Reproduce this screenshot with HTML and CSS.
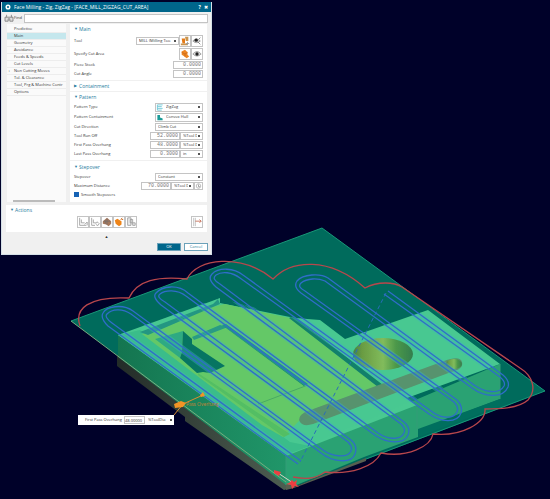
FILE: index.html
```html
<!DOCTYPE html>
<html lang="en">
<head>
<meta charset="utf-8">
<title>Face Milling - Zig, ZigZag</title>
<link rel="stylesheet" href="styles.css">
</head>
<body>
<main class="viewport">
<svg class="model" viewBox="0 0 550 499" preserveAspectRatio="xMinYMin meet" aria-label="Milled part with tool path">
<defs>
<linearGradient id="bore"><stop offset="0" stop-color="#43804a"/><stop offset=".15" stop-color="#6a9c43"/><stop offset=".5" stop-color="#82bc5c"/><stop offset=".72" stop-color="#4c984a"/><stop offset="1" stop-color="#347e4f"/></linearGradient>
<linearGradient id="side"><stop offset="0" stop-color="#147550"/><stop offset="1" stop-color="#209669"/></linearGradient>
<linearGradient id="base"><stop offset="0" stop-color="#232c28"/><stop offset="1" stop-color="#4f6053"/></linearGradient>
<clipPath id="top"><path d="m118 335 100-37 77 20 25 2 25 19 83-29 72 54-214 91z"/></clipPath>
<path id="passA" d="M298 464 108 326Q100 318 103 313C106 307 122 303 133 311L323 450C331 456 347 459 351 451Q353 447 348 442L161 305Q152 297 156 293C162 286 178 284 188 293L378 433C387 439 400 441 404 433Q406 429 401 424L216 287Q207 279 212 274C219 267 234 268 243 275L431 411C440 418 453 420 457 412Q459 407 454 402L301 293Q293 287 297 281C303 274 320 273 328 278L474 385C484 392 499 395 504 386Q506 382 500 377L384 294"/>
<path id="passB" d="M301 461 112 323Q104 317 107 314C112 309 122 308 131 314L321 453C331 461 351 465 355 454Q358 446 351 440L165 302Q156 297 160 294C165 290 177 289 186 296L376 436C387 443 404 445 408 435Q411 428 404 422L220 284Q211 279 216 275C222 271 232 272 240 278L429 414C440 422 457 424 461 413Q463 406 457 400L305 291Q297 287 301 283C307 278 318 278 325 281L472 388C484 397 503 399 508 387Q510 381 503 375L388 291"/>
</defs>
<path fill="url(#base)" d="M117 352v14l68 51v4l99 69 11-3z"/>
<path fill="#006b5c" d="M71 321 322 228 545 391 294 487z"/>
<path fill="none" stroke="#179878" d="M71 321 322 228 545 391 366 459"/>
<path fill="url(#side)" d="M118 335v22l168 128v-30z"/>
<path fill="#2aa273" d="M286 455 500 364v35l-82 31v7l-54 20-70 29-8-2z"/>
<path fill="#585f50" d="m286 484 8 3 72-29v3l-72 27-8 2z"/>
<path fill="#006f5e" d="m418 429 82-30v7l-82 31z"/>
<path fill="#49c991" d="m118 335 94-34 8-3v5l75 15 25 2 25 19 83-29 72 54-93 34 10 7-131 51z"/>
<path fill="#3bbd8a" d="m118 335 22-5 150 112 20 4-24 9z"/>
<path fill="#65c968" d="m142 334 70-27 13-3 70 15 87 67-82 34-17 17-21-12z"/>
<path fill="#54be64" d="m198 373 92 61-6 3-86-62z"/>
<path fill="#239783" d="m140 332 73-28 5-5 2 5-72 31z"/>
<path fill="#2a9c84" d="m192 337 28-12 8 2-34 13z"/>
<path fill="#2fab83" d="m155 339 28-8-1 21-2 6z"/>
<path fill="#077563" d="m183 331 9 8v5l33 22-15 7-7-1-6 1-17-15 2-6z"/>
<path fill="#13806c" d="m222 325 4-1 82 60-4 2zM293 316l90 69-5 2-89-69z"/>
<path fill="none" stroke="#4aaa64" d="m258 404 50-19"/>
<path fill="#58936e" d="m305 412 139-51q16-6 18 1t-11 10l-138 52q-10 3-13-2t5-10z"/>
<ellipse cx="454" cy="364" rx="8" ry="5" fill="url(#bore)"/>
<ellipse cx="383" cy="354" rx="30" ry="16" fill="url(#bore)"/>
<path fill="none" stroke="#329c79" d="M286 455v30M500 364v35M417 407v23"/>
<g fill="none" stroke="#40b3bb" stroke-width="4" opacity=".4" clip-path="url(#top)"><use href="#passA"/><use href="#passB"/></g>
<path fill="none" stroke="#78ad81" d="M71 321 286 482"/>
<g fill="none" stroke="#2f6dc8" stroke-width="1.3"><use href="#passA"/><use href="#passB"/></g>
<path fill="none" stroke="#286dbb" stroke-dasharray="4 3" d="M386 293 300 462"/>
<path fill="none" stroke="#b8474c" stroke-width="1.3" d="M80 326C74 309 88 296 129 298 137 280 158 276 187 279 197 258 241 253 273 279 291 260 329 256 365 288 378 281 394 282 402 287L520 368C533 376 537 390 528 400 518 409 497 409 485 409 486 423 461 437 433 434 431 446 408 458 381 453 374 467 350 475 325 472 314 480 304 479 293 477"/>
<path stroke="#d9d4c5" d="m278 473 15 10"/>
<path fill="#ed3f42" d="m274 470 7 2-2 4-5-3zm15 13 3-3 2 2 3-2-1 4 3 3-4-1-3 3-1-4-5-1z"/>
<path fill="none" stroke="#d98c31" d="m174 415 9-11 20-9"/>
<path fill="#f29426" d="m174 404 7-3 5 2-3 4-8 1zm26-9 3-3 2 4-4 1z"/>
<text x="186" y="406" class="note">Pass Overhang</text>
</svg>

<form class="dialog">
<header class="title"><svg class="gear" viewBox="0 0 8 8"><circle cx="4" cy="4" r="2.4" fill="none" stroke="#fff" stroke-width="2"/></svg><h1>Face Milling - Zig, ZigZag - [FACE_MILL_ZIGZAG_CUT_AREA]</h1><span>?</span><button type="button" aria-label="Close">✖</button></header>
<div class="find"><svg class="binocular" viewBox="0 0 12 10"><path d="M1 4h10v5H7V6H5v3H1zM3 1v3M9 1v3" fill="#ddd" stroke="#777"/></svg><label for="find">Find</label><input id="find"></div>
<div class="body">
<nav>
<a href="#p">Predictive</a><a href="#main" class="on">Main</a><a href="#g">Geometry</a><a href="#a">Avoidance</a><a href="#f">Feeds &amp; Speeds</a><a href="#c">Cut Levels</a><a href="#n" class="parent">Non Cutting Moves</a><a href="#t">Tol. &amp; Clearance</a><a href="#tp">Tool, Prg &amp; Machine Contr</a><a href="#o">Options</a>
<div class="bar"></div>
</nav>
<div class="panels">
<section id="main"><h2>Main</h2>
<div class="row tall"><label for="tool">Tool</label><select id="tool" class="toolname"><option>MILL (Milling Too</option></select><button type="button" class="sq" aria-label="New tool"><svg viewBox="0 0 12 12"><path d="M2 3h4v6H3z" fill="#e47a17"/><path d="M6 1h4v5H7zM1 9h8v2H1z" fill="#c99550"/><path d="M9 7v4M7 9h4" stroke="#999"/></svg></button><button type="button" class="sq" aria-label="Edit tool"><svg viewBox="0 0 12 12"><path d="M1 6q4-5 9 0-5 4-9 0" fill="#ddd" stroke="#999"/><circle cx="5" cy="5" r="2" fill="#222"/><path d="m7 7 3 3M8 4l2-2" stroke="#777"/></svg></button></div>
<div class="row tall"><label>Specify Cut Area</label><button type="button" class="sq" aria-label="Specify cut area"><svg viewBox="0 0 12 12"><path d="m2 3 4-2 3 3v3l2 2-3 2-4-3-2-1z" fill="#ee8622"/><path d="m2 4 4 2 3-2M6 6v3" stroke="#c96a1b" fill="none"/></svg></button><button type="button" class="sq" aria-label="Show cut area"><svg viewBox="0 0 12 12"><path d="M1 6q5-6 10 0-5 5-10 0" fill="#ddd" stroke="#999"/><circle cx="6" cy="6" r="2" fill="#222"/></svg></button></div>
<div class="row"><label for="stock">Piece Stock</label><input id="stock" value="0.0000"></div>
<div class="row"><label for="angle">Cut Angle</label><input id="angle" value="0.0000"></div>
</section>
<section class="closed"><h2 class="shut">Containment</h2></section>
<section><h2>Pattern</h2>
<div class="row mid"><label for="type">Pattern Type</label><div class="pick"><svg viewBox="0 0 8 8"><path d="M1 1h6M1 3h5M1 5h6M1 7h5M1 1v6" stroke="#6cc6d6" fill="none"/></svg><select id="type"><option>ZigZag</option></select></div></div>
<div class="row mid"><label for="cont">Pattern Containment</label><div class="pick"><svg viewBox="0 0 8 8"><path d="M1 1h3v3l3 1v2H1z" fill="#1b9b98"/></svg><select id="cont"><option>Convex Hull</option></select></div></div>
<div class="row"><label for="dir">Cut Direction</label><select id="dir"><option>Climb Cut</option></select></div>
<div class="row"><label for="run">Tool Run Off</label><input id="run" value="52.0000"><select class="unit" aria-label="Run off unit"><option>%Tool D</option></select></div>
<div class="row"><label for="first">First Pass Overhang</label><input id="first" value="48.0000"><select class="unit" aria-label="First overhang unit"><option>%Tool D</option></select></div>
<div class="row"><label for="last">Last Pass Overhang</label><input id="last" value="0.3000"><select class="unit" aria-label="Last overhang unit"><option>in</option></select></div>
</section>
<section class="step"><h2>Stepover</h2>
<div class="row"><label for="step">Stepover</label><select id="step"><option>Constant</option></select></div>
<div class="row"><label for="max">Maximum Distance</label><input id="max" value="70.0000"><select class="unit" aria-label="Distance unit"><option>%Tool D</option></select><button type="button" class="mini" aria-label="Lock distance"><svg viewBox="0 0 8 8"><circle cx="4" cy="4" r="3" fill="none" stroke="#aaa"/><path d="M4 2v3h2" stroke="#888" fill="none"/></svg></button></div>
<div class="row check"><input type="checkbox" id="smooth" checked><label for="smooth">Smooth Stepovers</label></div>
</section>
</div>
</div>
<section class="actions"><h2>Actions</h2><div class="tools">
<button type="button" class="sq" aria-label="Generate"><svg viewBox="0 0 12 12"><path d="M2 1v9h8M4 3v4h4M8 9l3-3v4" stroke="#999" fill="none"/></svg></button>
<button type="button" class="sq" aria-label="Replay"><svg viewBox="0 0 12 12"><path d="M2 1v9h4M4 3v4h3M7 8q1-4 4 0-1 4-4 1" stroke="#999" fill="none"/></svg></button>
<button type="button" class="sq" aria-label="Verify"><svg viewBox="0 0 12 12"><path d="m1 5 5-4 5 4v3l-3 3-3-2-4-1z" fill="#a6795d"/><path d="M2 5h8M6 2v7M4 4v4" stroke="#77706b"/></svg></button>
<button type="button" class="sq" aria-label="Simulate"><svg viewBox="0 0 12 12"><path d="m1 4 3-2 5 3v4l-3 2-4-3z" fill="#ee8418"/><path d="m8 3 2-2M9 3h2" stroke="#c65c0b"/></svg></button>
<button type="button" class="sq" aria-label="List"><svg viewBox="0 0 12 12"><path d="M2 1h4v9H2zM5 3h3v4H5zM8 7h3v3H8z" fill="#eee" stroke="#999"/></svg></button>
<button type="button" class="sq last" aria-label="Display options"><svg viewBox="0 0 12 12"><path d="M2 1v10M4 1v10" stroke="#bbb"/><path d="M4 5h7M9 3l2 2-2 2" stroke="#c4674d" fill="none"/></svg></button>
</div></section>
<div class="collapse">▲</div>
<footer><button type="button" class="ok">OK</button><button type="button">Cancel</button></footer>
</form>

<div class="float"><label for="over">First Pass Overhang</label><input id="over" value="48.00000"><select aria-label="Overhang unit"><option>%ToolDia</option></select></div>
</main>
</body>
</html>
```
FILE: styles.css
```css
* { box-sizing: border-box; }
body { margin: 0; background: #000129; color: #333; font: 4px/6px "Open Sans", "Noto Sans", sans-serif; }
.viewport { position: relative; min-height: 100vh; overflow: hidden; }
.model { display: block; width: 100%; }
.note { font: 5px Lato, sans-serif; fill: #bb833b; }
.dialog { position: absolute; left: 1px; top: 2px; width: 211px; background: #f0f0f0; border: 1px solid #d5e0e7; border-top: 0; }
.title { display: flex; align-items: center; gap: 3px; height: 10px; padding: 0 3px; background: #00668b; color: #fff; font-size: 5px; }
.title h1 { flex: 1; margin: 0; font-size: 5px; font-weight: 400; white-space: nowrap; }
.title span { font-weight: 700; }
.gear { width: 6px; height: 6px; }
button, input, select { font: inherit; color: inherit; border: 1px solid #c4c4c4; border-radius: 0; background: #fff; padding: 0; margin: 0; min-width: 0; }
.title button { border: 0; background: none; }
.find { display: flex; align-items: center; height: 12px; padding: 0 3px 0 2px; }
.binocular { width: 10px; height: 8px; }
.find input { flex: 1; height: 9px; margin-left: 2px; }
.body { display: flex; gap: 4px; padding: 0 4px; }
nav { display: flex; flex-direction: column; width: 59px; margin-left: 1px; padding-top: 2px; background: #fafafa; }
nav a { flex: none; height: 7px; padding-left: 7px; color: #333; text-decoration: none; white-space: nowrap; border-bottom: 1px solid #ededed; }
nav .on { background: #c5e7ed; }
nav .parent::before { content: "+"; float: left; margin-left: -6px; }
nav .bar { width: 42px; height: 2px; margin: auto 0 0 6px; background: #bbb; }
.panels { flex: 1; display: flex; flex-direction: column; gap: 1px; min-width: 0; }
section { background: #fff; padding: 0 4px 2px; }
.closed { padding-bottom: 0; }
h2 { display: flex; align-items: center; margin: 0; height: 10px; font-size: 5px; font-weight: 400; color: #287c9d; }
h2::before { content: "▼"; font-size: 4px; width: 5px; }
h2.shut::before { content: "▶"; }
.row { display: flex; align-items: center; height: 9px; }
.row > label { flex: 1; white-space: nowrap; }
.row.tall { height: 13px; }
.row.mid { height: 10px; }
.row input { width: 30px; height: 8px; padding-right: 1px; text-align: right; font: 5px "Liberation Mono", monospace; color: #777; }
select { appearance: none; height: 8px; width: 48px; padding: 0 5px 0 2px; background: linear-gradient(#555, #555) right 2px center / 2px 2px no-repeat #fff; }
select.toolname { width: 43px; }
.row .unit { width: 23px; }
.pick { display: flex; align-items: center; width: 48px; height: 9px; border: 1px solid #c4c4c4; }
.pick svg { width: 8px; height: 7px; }
.pick select { flex: 1; border: 0; height: 7px; }
.sq { width: 12px; height: 12px; flex: none; }
.sq svg, .mini svg { display: block; width: 100%; height: 100%; }
.mini { width: 9px; height: 8px; }
.step { padding-bottom: 3px; }
.step h2 { height: 11px; }
.row.check input { appearance: none; width: 5px; height: 5px; margin-right: 2px; border: 0; background: #1763b5; }
.actions { margin: 3px 4px 0; padding-bottom: 4px; }
.actions h2 { margin-bottom: 1px; }
.tools { display: flex; justify-content: center; position: relative; }
.tools .last { position: absolute; right: 0; }
.collapse { height: 11px; text-align: center; line-height: 9px; }
footer { display: flex; justify-content: flex-end; gap: 3px; padding: 0 3px 3px; }
footer button { width: 24px; height: 8px; border-color: #6ba1b9; color: #287c9d; }
footer .ok { background: #00668b; color: #fff; }
.float { position: absolute; left: 78px; top: 415px; display: flex; align-items: center; gap: 1px; width: 96px; height: 10px; padding-left: 7px; background: #fff; white-space: nowrap; }
.float label { flex: 1; }
.float input { width: 21px; height: 8px; }
.float select { width: 28px; border: 0; }
```
